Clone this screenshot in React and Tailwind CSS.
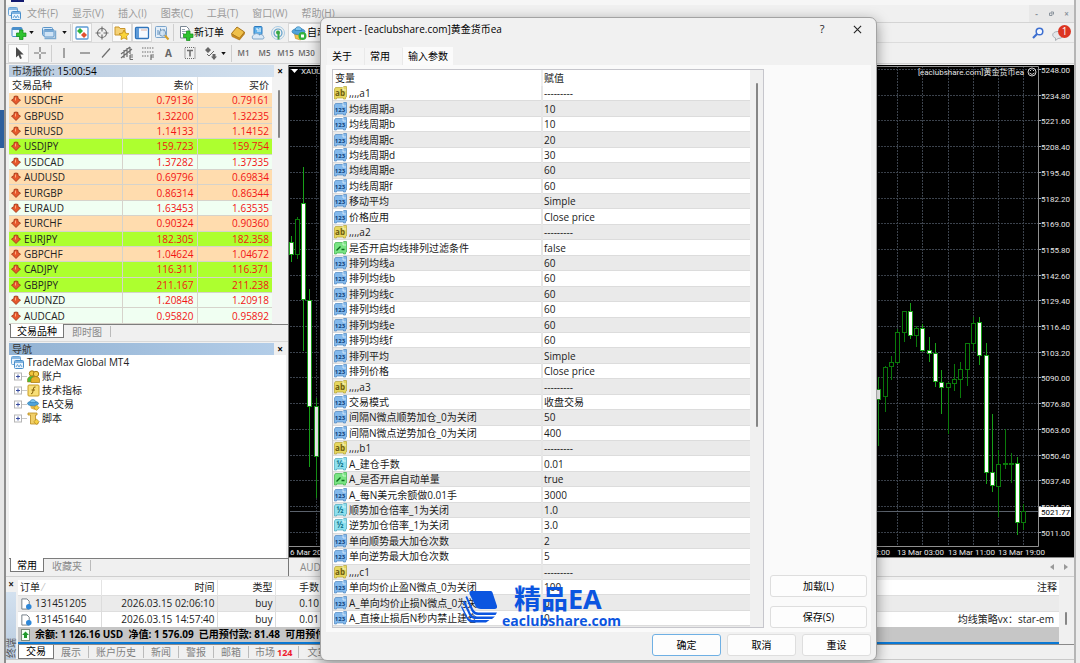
import React, { useState } from "react";

const SYMBOLS = [
  ["USDCHF", "0.79136", "0.79161", "o"],
  ["GBPUSD", "1.32200", "1.32235", "o"],
  ["EURUSD", "1.14133", "1.14152", "o"],
  ["USDJPY", "159.723", "159.754", "g"],
  ["USDCAD", "1.37282", "1.37335", "w"],
  ["AUDUSD", "0.69796", "0.69834", "o"],
  ["EURGBP", "0.86314", "0.86344", "o"],
  ["EURAUD", "1.63453", "1.63535", "w"],
  ["EURCHF", "0.90324", "0.90360", "o"],
  ["EURJPY", "182.305", "182.358", "g"],
  ["GBPCHF", "1.04624", "1.04672", "o"],
  ["CADJPY", "116.311", "116.371", "g"],
  ["GBPJPY", "211.167", "211.238", "g"],
  ["AUDNZD", "1.20848", "1.20918", "w"],
  ["AUDCAD", "0.95820", "0.95892", "w"],
];

const ROW_BG = { o: "bg-[#ffdcae]", g: "bg-[#adff2f]", w: "bg-[#f0fff2]" };

const PARAMS = [
  ["ab", ",,,,a1", "---------"],
  ["int", "均线周期a", "10"],
  ["int", "均线周期b", "10"],
  ["int", "均线周期c", "20"],
  ["int", "均线周期d", "30"],
  ["int", "均线周期e", "60"],
  ["int", "均线周期f", "60"],
  ["int", "移动平均", "Simple"],
  ["int", "价格应用", "Close price"],
  ["ab", ",,,,a2", "---------"],
  ["bool", "是否开启均线排列过滤条件", "false"],
  ["int", "排列均线a", "60"],
  ["int", "排列均线b", "60"],
  ["int", "排列均线c", "60"],
  ["int", "排列均线d", "60"],
  ["int", "排列均线e", "60"],
  ["int", "排列均线f", "60"],
  ["int", "排列平均", "Simple"],
  ["int", "排列价格", "Close price"],
  ["ab", ",,,,a3", "---------"],
  ["int", "交易模式", "收盘交易"],
  ["int", "间隔N微点顺势加仓_0为关闭", "50"],
  ["int", "间隔N微点逆势加仓_0为关闭", "400"],
  ["ab", ",,,,b1", "---------"],
  ["dbl", "A_建仓手数", "0.01"],
  ["bool", "A_是否开启自动单量", "true"],
  ["int", "A_每N美元余额做0.01手", "3000"],
  ["dbl", "顺势加仓倍率_1为关闭", "1.0"],
  ["dbl", "逆势加仓倍率_1为关闭", "3.0"],
  ["int", "单向顺势最大加仓次数", "2"],
  ["int", "单向逆势最大加仓次数", "5"],
  ["ab", ",,,,c1", "---------"],
  ["int", "单向均价止盈N微点_0为关闭", "100"],
  ["int", "A_单向均价止损N微点_0为关闭", "0"],
  ["int", "A_直接止损后N秒内禁止建仓", "0"],
  ["blank", "", ""],
];

const TYPE_ICON = {
  ab: { fill: "#e6d75f", edge: "#b5a436", ink: "#6b5c10", text: "ab" },
  int: { fill: "#83b9ec", edge: "#4f86c0", ink: "#0f3f7a", text: "123" },
  dbl: { fill: "#8ee0ee", edge: "#4aa8bd", ink: "#12748c", text: "½" },
  bool: { fill: "#79e583", edge: "#3faf4c", ink: "#0b6a1c" },
  blank: { fill: "#83b9ec", edge: "#4f86c0", ink: "#0f3f7a" },
};

const PRICES = [
  "5248.00", "5234.80", "5221.60", "5208.40", "5195.40", "5182.20", "5169.00",
  "5155.80", "5142.60", "5129.40", "5116.40", "5103.20", "5090.00", "5076.80",
  "5063.60", "5050.40", "5037.40", "5024.20", "5011.00",
];

// x, high, bodyTop, bodyBottom, low, bearish
const CANDLES = [
  [291, 236, 242, 254, 262, 1],
  [297, 217, 219, 254, 259, 0],
  [303, 167, 203, 299, 351, 1],
  [309, 289, 300, 406, 467, 1],
  [316, 398, 406, 456, 498, 1],
  [878, 377, 389, 399, 446, 1],
  [885, 366, 367, 396, 412, 0],
  [891, 356, 362, 366, 380, 0],
  [897, 329, 332, 362, 364, 0],
  [904, 311, 311, 332, 342, 0],
  [910, 303, 311, 335, 339, 1],
  [916, 326, 328, 335, 347, 0],
  [922, 324, 328, 350, 352, 1],
  [929, 337, 350, 353, 362, 1],
  [935, 343, 353, 381, 387, 1],
  [941, 370, 382, 387, 414, 1],
  [948, 382, 383, 387, 434, 0],
  [954, 364, 379, 383, 391, 0],
  [960, 362, 369, 379, 398, 0],
  [967, 343, 343, 369, 386, 0],
  [973, 317, 323, 343, 351, 0],
  [979, 317, 322, 355, 365, 1],
  [986, 343, 355, 472, 484, 1],
  [992, 414, 472, 485, 492, 1],
  [998, 450, 464, 486, 517, 0],
  [1005, 429, 463, 464, 469, 0],
  [1011, 453, 463, 464, 483, 0],
  [1017, 457, 463, 522, 535, 1],
  [1023, 504, 511, 522, 530, 0],
];

const GRID_X = [316, 341, 366, 392, 417, 847, 872, 897, 922, 948, 973, 998, 1023];

const MENUS = ["文件(F)", "显示(V)", "插入(I)", "图表(C)", "工具(T)", "窗口(W)", "帮助(H)"];

const TypeIcon = ({ type }) => {
  const t = TYPE_ICON[type];
  return (
    <svg viewBox="0 0 13 14" className="h-[14px] w-[13px] shrink-0">
      <path d="M1.500 1.500h7l1.500-1h2.500v10.500l-1 .5v1.500h-2v-1h-7v1h-2v-10z" fill={t.fill} stroke={t.edge} strokeWidth=".7" />
      <path d="M9 1v3h3" fill="none" stroke="#fff" strokeOpacity=".6" />
      {type === "bool" && (
        <path d="M2.500 9.500l4-4M7.500 8.500h3" stroke={t.ink} strokeWidth="1.400" fill="none" />
      )}
      {t.text && (
        <text x="6" y="9.500" textAnchor="middle" fontSize={type === "int" ? 6 : 8} fontWeight="700" fill={t.ink}>{t.text}</text>
      )}
    </svg>
  );
};

const WindowsIcon = () => (
  <svg viewBox="0 0 13 13" className="h-[13px] w-[13px] shrink-0">
    <rect x=".5" y=".5" width="9" height="8" rx="1" fill="#eaf4fd" stroke="#6aa5d8" />
    <path d="M1 2h8" stroke="#6aa5d8" strokeWidth="1.500" />
    <rect x="3.500" y="4.500" width="9" height="8" rx="1" fill="#eaf4fd" stroke="#4a8fcb" />
    <path d="M4 6h8" stroke="#5a9dd6" strokeWidth="1.500" />
    <path d="M5 11l1.500-2.500L8 11l1.500-2.500L11 11" fill="none" stroke="#4a8fcb" strokeWidth=".8" />
  </svg>
);

const Plus = ({ x = 5, y = 5 }) => (
  <path transform={`translate(${x} ${y})`} d="M3 0h3.500v3h3v3.500h-3v3h-3.500v-3h-3v-3.500h3z" fill="#2fc32f" stroke="#118a18" strokeWidth=".7" />
);

const NewChartIcon = () => (
  <svg viewBox="0 0 16 16" className="h-4 w-4">
    <rect x="1" y="2.500" width="10" height="9" rx="1" fill="#eef6fd" stroke="#4a8fcb" />
    <path d="M1 4h10" stroke="#4a8fcb" strokeWidth="2" />
    <Plus x={5.5} y={5} />
  </svg>
);

const ProfilesIcon = () => (
  <svg viewBox="0 0 16 16" className="h-4 w-4">
    <rect x="1.500" y="2.500" width="10" height="8" rx="1" fill="#d8e9f8" stroke="#5a94c8" />
    <path d="M3.500 13.500h11v-8" fill="none" stroke="#7daad0" strokeWidth="1.500" />
    <rect x="3" y="4.500" width="10" height="7.500" rx="1" fill="#cfe3f5" stroke="#5a94c8" />
    <path d="M3.500 6h9" stroke="#5a94c8" strokeWidth="1.500" />
  </svg>
);

const MarketIcon = () => (
  <svg viewBox="0 0 16 16" className="h-4 w-4">
    <rect x="2" y="2" width="12" height="12" rx="1" fill="#fff" stroke="#5b9bd5" strokeWidth="1.300" />
    <path d="M6 3l3 3-3 3-3-3z" fill="#2db43a" />
    <path d="M10 7l3 3-3 3-3-3z" fill="#e2502e" />
  </svg>
);

const TargetIcon = () => (
  <svg viewBox="0 0 16 16" className="h-4 w-4" fill="none" stroke="#707070" strokeWidth="1.200">
    <circle cx="8" cy="8" r="4.500" />
    <path d="M8 1.500v5M8 9.500v5M1.500 8h5M9.500 8h5" />
  </svg>
);

const FolderStarIcon = () => (
  <svg viewBox="0 0 16 16" className="h-4 w-4">
    <path d="M1 2h4l1 1.500h5V10H1z" fill="#f5d277" stroke="#c9962c" />
    <path d="M10 5l1.600 3.200 3.400.5-2.500 2.400.6 3.400-3.100-1.600-3 1.600.5-3.400L5 8.700l3.500-.5z" fill="#fbd53a" stroke="#c08a12" strokeWidth=".8" />
  </svg>
);

const PanelIcon = () => (
  <svg viewBox="0 0 16 16" className="h-4 w-4">
    <rect x="1.500" y="2.500" width="13" height="11" rx="1" fill="#f4f9ff" stroke="#2f74bb" strokeWidth="1.300" />
    <path d="M2 3h3v10H2z" fill="#5f9bd8" />
    <path d="M7 5h6" stroke="#e0b0a0" />
  </svg>
);

const TesterIcon = () => (
  <svg viewBox="0 0 16 16" className="h-4 w-4">
    <rect x="1.500" y="1.500" width="11" height="11" rx="1" fill="#e3eef8" stroke="#7ba5cc" />
    <path d="M4 10V5M6.500 9V3.500M10 10V4" stroke="#5c8fc0" />
    <circle cx="8.500" cy="8" r="3.200" fill="#cfe2f3" fillOpacity=".8" stroke="#7a9cbc" />
    <path d="M11 10.500l3.500 4" stroke="#d8a028" strokeWidth="2" />
  </svg>
);

const OrderIcon = () => (
  <svg viewBox="0 0 16 16" className="h-4 w-4">
    <path d="M2.500 1.500h6l2.500 2.500v9h-8.500z" fill="#fff" stroke="#7a8794" />
    <path d="M4 4.500h3M4 6.500h4M4 8.500h2" stroke="#9aa7b4" />
    <Plus x={5.5} y={6} />
  </svg>
);

const BookIcon = () => (
  <svg viewBox="0 0 16 16" className="h-4 w-4">
    <path d="M1.500 8.500L7 2l7.500 5-5 7z" fill="#efc04a" stroke="#a8741a" />
    <path d="M1.500 9l.5 2.500L9.500 15l5-6V7l-5 6z" fill="#c98a1e" stroke="#a8741a" strokeWidth=".6" />
  </svg>
);

const CommunityIcon = () => (
  <svg viewBox="0 0 16 16" className="h-4 w-4">
    <rect x="4" y="1.500" width="8" height="8" rx="1" fill="#5fb0ea" stroke="#2b79bd" />
    <path d="M6 4h2v3M10 3v4" stroke="#fff" fill="none" />
    <path d="M3 14a2.500 2.500 0 0 1 .5-4 3.500 3 0 0 1 6 0 2.500 2.500 0 0 1 4 1.500A1.500 1.500 0 0 1 13 14z" fill="#dbe9f6" stroke="#7fa5c8" />
  </svg>
);

const SignalIcon = () => (
  <svg viewBox="0 0 16 16" className="h-4 w-4" fill="none">
    <circle cx="8" cy="8" r="6.500" stroke="#a9cbe3" />
    <circle cx="8" cy="8" r="4" stroke="#5d9fca" strokeWidth="1.200" />
    <circle cx="8" cy="7.500" r="2" fill="#37a845" />
    <path d="M8.500 8v6.500" stroke="#37a845" strokeWidth="2" />
  </svg>
);

const HatIcon = () => (
  <svg viewBox="0 0 16 16" className="h-4 w-4 shrink-0">
    <path d="M3.500 9l1 4.500 5 1.500 3-4z" fill="#f0c24a" stroke="#b98a1c" strokeWidth=".6" />
    <ellipse cx="7.500" cy="6.500" rx="6.500" ry="3" fill="#4fa3d9" stroke="#2a78b0" strokeWidth=".7" />
    <path d="M4 5.500c0-5 6.500-5 7 0z" fill="#7cc4ee" stroke="#2a78b0" strokeWidth=".7" />
    <circle cx="11.500" cy="11" r="4" fill="#31b23c" />
    <path d="M10 9.500h3v3h-3z" fill="#fff" />
  </svg>
);

const Caret = () => (
  <svg viewBox="0 0 6 4" className="h-[3px] w-[5px]"><path d="M0 0h6L3 4z" fill="#111" /></svg>
);

const ToolBtn = ({ label, active, children }) => (
  <button
    type="button"
    aria-label={label}
    className={`flex h-[19px] w-[20px] items-center justify-center ${active ? "border border-[#d8d8d8] bg-[#fbfbfb]" : ""}`}
  >
    {children}
  </button>
);

const Sep = () => <span className="mx-px h-[17px] w-px bg-[#cfcfcf]" />;

const LineIcon = ({ children }) => (
  <svg viewBox="0 0 16 16" className="h-4 w-4" fill="none" stroke="#6e6e6e" strokeWidth="1.200">{children}</svg>
);

const Toolbars = () => (
  <div className="bg-[#f0f0f0] text-[#222]">
    <div className="flex h-5 items-center border-b border-[#dcdcdc] pl-[3px]">
      <ToolBtn label="新图表"><NewChartIcon /></ToolBtn>
      <span className="flex w-[10px]"><Caret /></span>
      <ToolBtn label="配置文件"><ProfilesIcon /></ToolBtn>
      <span className="flex w-[10px] justify-center"><Caret /></span>
      <Sep />
      <ToolBtn label="市场报价" active><MarketIcon /></ToolBtn>
      <ToolBtn label="数据窗口"><TargetIcon /></ToolBtn>
      <ToolBtn label="导航" active><FolderStarIcon /></ToolBtn>
      <ToolBtn label="终端" active><PanelIcon /></ToolBtn>
      <ToolBtn label="策略测试"><TesterIcon /></ToolBtn>
      <Sep />
      <button type="button" className="flex h-[19px] items-center pl-[3px] pr-1 text-black">
        <OrderIcon />新订单
      </button>
      <ToolBtn label="编辑器"><BookIcon /></ToolBtn>
      <ToolBtn label="社区"><CommunityIcon /></ToolBtn>
      <ToolBtn label="信号"><SignalIcon /></ToolBtn>
      <button type="button" className="flex h-[19px] items-center border border-[#d8d8d8] bg-[#fbfbfb] px-0.5 text-black">
        <HatIcon />自动交易
      </button>
      <div className="ml-auto flex items-center gap-2 pr-[3px]">
        <button type="button" aria-label="搜索">
          <svg viewBox="0 0 12 12" className="h-3 w-3">
            <circle cx="7.500" cy="4.500" r="3.300" fill="#f4f8ff" stroke="#3d6fd0" strokeWidth="1.500" />
            <path d="M5 7l-4 4" stroke="#3d6fd0" strokeWidth="2.200" />
          </svg>
        </button>
        <button type="button" className="relative flex h-4 w-[19px] items-end" aria-label="通知 1">
          <svg viewBox="0 0 12 10" className="h-[10px] w-3">
            <path d="M6 .5c7 0 7 7 0 7l-2.500 2V7C-1 5.500 0 .5 6 .5z" fill="#e4e7ea" stroke="#aab0b6" />
          </svg>
          <span className="absolute right-0 top-0 flex h-[13px] w-[13px] items-center justify-center rounded-full bg-[#dc3522] text-white">1</span>
        </button>
      </div>
    </div>
    <div className="flex h-[21px] items-center border-b border-[#d2d2d2] pl-[2px] text-[8px] font-semibold text-[#666] [&>button]:w-[21px]">
      <ToolBtn label="光标" active>
        <svg viewBox="0 0 16 16" className="h-4 w-4"><path d="M5 2v10.500l2.500-2.200 1.600 3.700 1.800-.8-1.600-3.600h3.400z" fill="#4a4a4a" /></svg>
      </ToolBtn>
      <ToolBtn label="十字线"><LineIcon><path d="M8 2v5M8 9v5M2 8h5M9 8h5" /></LineIcon></ToolBtn>
      <Sep />
      <ToolBtn label="垂直线"><LineIcon><path d="M8 3v10" /></LineIcon></ToolBtn>
      <ToolBtn label="水平线"><LineIcon><path d="M3 8h10" /></LineIcon></ToolBtn>
      <ToolBtn label="趋势线"><LineIcon><path d="M4 12.500l8-9" /></LineIcon></ToolBtn>
      <ToolBtn label="通道">
        <LineIcon><path d="M2 9l9-7M2 13L13 4M5 5v8M8 3v9M11 2v7M11 10h3M11 12h3M11 14.500h3M11 10v4.500" /></LineIcon>
      </ToolBtn>
      <ToolBtn label="斐波那契">
        <LineIcon><path d="M2 3h12M2 7h12M2 11h7" strokeDasharray="1.500 1" /><path d="M11 15v-5h3M11 12h3" /></LineIcon>
      </ToolBtn>
      <ToolBtn label="文字"><span className="text-[10px] font-bold">A</span></ToolBtn>
      <ToolBtn label="标签">
        <LineIcon><rect x="3" y="2.500" width="10" height="11" strokeDasharray="1 1" /><path d="M5 5.500h6M8 5.500v6" strokeWidth="1.600" /></LineIcon>
      </ToolBtn>
      <ToolBtn label="箭头">
        <svg viewBox="0 0 16 16" className="h-4 w-4" fill="#666">
          <path d="M5 2l3 3-3 3-3-3zM9.500 9h3v2.500H14L11 15l-3-3.500h1.500z" />
          <path d="M4 9l2 2 5-5" stroke="#666" fill="none" />
        </svg>
      </ToolBtn>
      <span className="flex w-[9px]"><Caret /></span>
      <Sep />
      {["M1", "M5", "M15", "M30", "H1"].map((p) => (
        <button key={p} type="button" className="h-[19px] text-center">{p}</button>
      ))}
    </div>
  </div>
);

const PanelTabs = ({ tabs }) => (
  <div className="flex h-[14px] items-stretch border-t border-[#7d7d7d] bg-[#f0f0f0] pl-px leading-[12px] text-[#8a8a8a]">
    {tabs.map((t, i) => (
      <button
        key={t}
        type="button"
        className={i === 0 ? "-mt-px border border-t-0 border-[#777] bg-white px-[6px] text-black" : "my-px border-r border-[#bbb] px-2"}
      >
        {t}
      </button>
    ))}
  </div>
);

const PanelTitle = ({ children, focused }) => (
  <div className="flex h-[12px] items-center leading-[12px] text-[#333]">
    <h2 className={`flex-1 pl-[3px] ${focused ? "bg-linear-to-r from-[#92b2d3] to-[#b3cde8]" : "bg-linear-to-r from-[#b9cbdf] to-[#d3e1ef]"}`}>{children}</h2>
    <button type="button" aria-label="关闭" className="mr-[2px] w-3 text-center font-bold text-black">×</button>
  </div>
);

const MarketWatch = () => (
  <section>
    <PanelTitle>市场报价: <span className="text-black">15:00:54</span></PanelTitle>
    <div className="flex h-[247px] overflow-hidden bg-[#f2f2f2]">
      <table className="h-[247px] w-[263px] table-fixed border-collapse bg-white leading-[14px]">
        <thead>
          <tr className="h-4">
            <th className="w-[113px] pl-[3px] text-left font-normal">交易品种</th>
            <th className="w-[75px] border-l border-[#e4e4e4] pr-[3px] text-right font-normal">卖价</th>
            <th className="border-l border-[#e4e4e4] pr-[3px] text-right font-normal">买价</th>
          </tr>
        </thead>
        <tbody>
          {SYMBOLS.map(([name, bid, ask, tone]) => (
            <tr key={name} className={`border-b border-[#d6d3cb] ${ROW_BG[tone]}`}>
              <td className="pl-[2px]">
                <span className="flex items-center gap-[3px]">
                  <svg viewBox="0 0 10 10" className="h-[10px] w-[10px]">
                    <path d="M3 1.500q2-1 4 0v2l2.500 1.500L5 9.500.5 5 3 3.500z" fill="#e6582c" stroke="#9c3411" strokeWidth=".8" />
                    <path d="M4.500 2.500v3" stroke="#ffab7a" />
                  </svg>
                  {name}
                </span>
              </td>
              <td className="border-l border-[#d6d3cb] pr-[3px] text-right text-[#f21414]">{bid}</td>
              <td className="border-l border-[#d6d3cb] pr-[3px] text-right text-[#f21414]">{ask}</td>
            </tr>
          ))}
        </tbody>
      </table>
      <span className="ml-[6px] mt-[13px] h-12 w-[2px] rounded bg-[#868686]" />
    </div>
    <PanelTabs tabs={["交易品种", "即时图"]} />
  </section>
);

const TREE = [
  ["账户", <svg viewBox="0 0 13 13" className="h-[13px] w-[13px]"><circle cx="5" cy="3.500" r="2.700" fill="#f1c63a" stroke="#a77c12" /><path d="M.5 12V9q1-3 5-3t5 3v3z" fill="#3fbe3c" stroke="#a77c12" strokeWidth=".6" /><circle cx="9" cy="4" r="2.700" fill="#f3cf50" stroke="#a77c12" /><path d="M4 12.500V9q1-2.500 4.500-2.500t4 2.500v3.500z" fill="#e5b22c" stroke="#a77c12" strokeWidth=".7" /></svg>],
  ["技术指标", <svg viewBox="0 0 13 13" className="h-[13px] w-[13px]"><rect x="1" y="1" width="11" height="11" rx="1" fill="#f8df78" stroke="#c89b22" /><path d="M8.500 3q-2-.5-2.200 2l-.5 3q-.2 2-1.800 1.800M4.500 6h3.500" fill="none" stroke="#86610b" /></svg>],
  ["EA交易", <svg viewBox="0 0 13 13" className="h-[13px] w-[13px]"><path d="M3 7l1 3.500 4 1.500 2-4z" fill="#e6b84a" /><ellipse cx="6" cy="5.500" rx="5.500" ry="2.300" fill="#4fa3d9" stroke="#2a78b0" strokeWidth=".6" /><path d="M3 4.500c0-4 5.500-4 6 0z" fill="#7cc4ee" stroke="#2a78b0" strokeWidth=".6" /><path d="M9.500 7l2.700 2.700-2.700 2.700-2.700-2.700z" fill="#f5cf45" stroke="#a77c12" strokeWidth=".6" /></svg>],
  ["脚本", <svg viewBox="0 0 13 13" className="h-[13px] w-[13px]"><path d="M1 1h9v2H8.500v7H11v2H3.500V3H1z" fill="#f1cf69" stroke="#b98a1c" strokeWidth=".8" /><path d="M9.500 7l2.700 2.700-2.700 2.700-2.700-2.700z" fill="#f5cf45" stroke="#a77c12" strokeWidth=".6" /></svg>],
];

const Navigator = () => (
  <section className="flex min-h-0 flex-1 flex-col border-t border-[#d9d9d9] pt-[1px]">
    <PanelTitle focused>导航</PanelTitle>
    <div className="mr-[2px] flex-1 bg-white px-[2px]">
      <div className="flex h-[14px] items-center gap-[3px]"><WindowsIcon />TradeMax Global MT4</div>
      <ul>
        {TREE.map(([label, icon]) => (
          <li key={label} className="flex h-[14px] items-center pl-[3px] leading-[14px]">
            <svg viewBox="0 0 13 9" className="h-[9px] w-[13px]">
              <path d="M8 4.500h5" stroke="#c8c8c8" />
              <rect x=".5" y="1" width="7" height="7" fill="#fff" stroke="#b5b5b5" />
              <path d="M2 4.500h4M4 2.500v4" stroke="#3a4fa0" />
            </svg>
            {icon}
            <span className="pl-[2px]">{label}</span>
          </li>
        ))}
      </ul>
    </div>
    <PanelTabs tabs={["常用", "收藏夹"]} />
  </section>
);

const Chart = () => (
  <svg viewBox="289 65 785 492" preserveAspectRatio="none" className="min-h-0 w-full flex-1 bg-black font-[Roboto,'Noto_Sans_CJK_SC',sans-serif]" fontSize="8" fill="#e6e6e6">
    {GRID_X.map((x) => (
      <path key={x} d={`M${x + 0.5} 66V546`} stroke="#3c434d" strokeDasharray="2 1" />
    ))}
    {PRICES.map((p, i) => {
      const y = Math.round(70 + i * 25.7);
      return (
        <g key={p}>
          <path d={`M290 ${y - 0.5}H1038`} stroke="#3c434d" strokeDasharray="2 1" />
          <path d={`M1038 ${y - 0.5}h3`} stroke="#aaa" />
          <text x="1041" y={y + 3}>{p}</text>
        </g>
      );
    })}
    <path d="M290 511.500H1038" stroke="#5b626c" />
    <path d="M289 66.500H1038.500V546.500H289" fill="none" stroke="#8f8f8f" />
    {CANDLES.map(([x, hi, top, bot, lo, bear]) => (
      <g key={x} stroke={bear ? "#18a018" : "#0a7a0a"}>
        <path d={`M${x + 0.5} ${hi}V${lo}`} />
        <rect x={x - 1.5} y={top + 0.5} width="4" height={bot - top} fill={bear ? "#fff" : "#000"} />
      </g>
    ))}
    <path d="M291 69h7l-3.500 4z" fill="#fff" />
    <text x="301" y="74">XAUUSD,H1</text>
    <text x="1024" y="75" textAnchor="end">[eaclubshare.com]黄金货币ea</text>
    <circle cx="1032" cy="72" r="4" fill="none" stroke="#ccc" />
    <path d="M1029.500 73q2.500 3 5 0M1030.500 70v1M1033.500 70v1" fill="none" stroke="#ccc" />
    <text x="290" y="555">6 Mar 2026</text>
    <text x="890" y="555" textAnchor="end">12 Mar 23:00</text>
    <text x="897" y="555">13 Mar 03:00</text>
    <text x="948" y="555">13 Mar 11:00</text>
    <text x="998" y="555">13 Mar 19:00</text>
    <rect x="1039" y="507" width="32" height="10" fill="#fff" />
    <text x="1041" y="515" fill="#000">5021.77</text>
  </svg>
);

const ORDERS = [
  ["131451205", "2026.03.15 02:06:10", "buy", "0.10", ""],
  ["131451640", "2026.03.15 14:57:40", "buy", "0.01", "均线策略vx：star-em"],
];

const Terminal = () => (
  <section className="flex border-t border-[#cfcfcf] pt-[3px]">
    <div className="flex w-[10px] flex-col items-center leading-[8px]">
      <button type="button" aria-label="关闭" className="font-bold">×</button>
      <div className="mt-1 flex w-full flex-1 items-end justify-center bg-linear-to-b from-[#d3e1ef] to-[#b9cbdf] pb-px text-[#555]">
        <span className="leading-[10px] [writing-mode:sideways-lr]">终端</span>
      </div>
    </div>
    <div className="ml-[2px] min-w-0 flex-1">
      <div className="flex">
        <div className="min-w-0 flex-1 border-b-2 border-[#0a78d4] bg-[#c6c6c6]">
          <table className="w-full table-fixed border-collapse bg-white leading-[15px]">
            <thead>
              <tr>
                <th className="w-[83px] pl-[2px] text-left font-normal">订单 <span className="text-[#bbb]">⁄</span></th>
                <th className="w-[116px] border-l border-[#e4e4e4] pr-[2px] text-right font-normal">时间</th>
                <th className="w-[58px] border-l border-[#e4e4e4] pr-[2px] text-right font-normal">类型</th>
                <th className="w-[46px] border-l border-[#e4e4e4] pr-[2px] text-right font-normal">手数</th>
                <th className="pr-[2px] text-right font-normal">注释</th>
              </tr>
            </thead>
            <tbody>
              {ORDERS.map(([id, time, type, lots, note], i) => (
                <tr key={id} className={`border-t border-[#dedede] ${i === 0 ? "bg-[#ebebeb]" : "bg-white"}`}>
                  <td className="pl-[2px]">
                    <span className="flex items-center gap-[3px]">
                      <svg viewBox="0 0 12 13" className="h-3 w-3">
                        <path d="M1.500 1h5.500l2.500 2.500v8.500h-8z" fill="#fff" stroke="#6d7780" />
                        <circle cx="9" cy="9.500" r="3" fill="#2d87d8" />
                      </svg>
                      {id}
                    </span>
                  </td>
                  <td className="border-l border-[#dcdcdc] pr-[2px] text-right">{time}</td>
                  <td className="border-l border-[#dcdcdc] pr-[2px] text-right">{type}</td>
                  <td className="border-l border-[#dcdcdc] pr-[2px] text-right">{lots}</td>
                  <td className="pr-[5px] text-right">{note}</td>
                </tr>
              ))}
            </tbody>
          </table>
          <p className="flex h-[15px] items-center gap-[3px] overflow-hidden pl-[2px] font-bold whitespace-pre text-black">
            <svg viewBox="0 0 12 12" className="h-3 w-3 shrink-0">
              <rect x="1.500" y=".5" width="8" height="11" fill="#f4fff4" stroke="#7c8a7c" />
              <path d="M5.500 2.500L9 6H7v3H4V6H2z" fill="#1f9a2a" />
            </svg>
            余额: 1 126.16 USD  净值: 1 576.09  已用预付款: 81.48  可用预付款: 1 494.61
          </p>
        </div>
        <div className="w-[15px] pl-[6px] pt-[32px]">
          <div className="h-[13px] w-[2px] rounded bg-[#868686]" />
        </div>
      </div>
      <div className="flex h-[15px] items-stretch border-t border-[#8a8a8a] leading-[13px] text-[#808080]">
        <button type="button" className="border border-t-0 border-[#777] bg-white px-[7px] text-black">交易</button>
        {["展示", "账户历史", "新闻", "警报", "邮箱"].map((t) => (
          <button key={t} type="button" className="my-px border-r border-[#bbb] px-[7px]">{t}</button>
        ))}
        <button type="button" className="my-px flex border-r border-[#bbb] px-[6px]">
          市场<b className="pl-0.5 text-[9px] text-[#ee1c2e]">124</b>
        </button>
        <button type="button" className="px-2">文章</button>
      </div>
    </div>
  </section>
);

const dialogButton = "h-[22px] rounded-[3px] border bg-[#fdfdfd] text-center text-black";

const ExpertDialog = () => {
  const [tab, setTab] = useState(2);

  return (
    <div
      role="dialog"
      aria-labelledby="dlg-title"
      className="absolute bottom-[2px] left-[320px] top-[17px] flex w-[557px] flex-col rounded-[7px] border border-[#a3a3a3] bg-[#f1f1f1] px-[5px] pb-[4px] shadow-[0_4px_14px_rgba(0,0,0,0.4)]"
    >
      <div className="flex h-[29px] items-start justify-between pr-[8px] pt-[4px]">
        <h1 id="dlg-title" className="leading-[14px] text-black">Expert - [eaclubshare.com]黄金货币ea</h1>
        <div className="flex gap-[26px] leading-[14px]">
          <button type="button" aria-label="帮助" className="w-[10px] text-[11px]">?</button>
          <button type="button" aria-label="关闭" className="flex h-[14px] w-[10px] items-center">
            <svg viewBox="0 0 10 10" className="h-[9px] w-[9px]"><path d="M1 1l8 8M9 1L1 9" stroke="#222" strokeWidth="1.200" /></svg>
          </button>
        </div>
      </div>
      <div role="tablist" className="flex h-[18px] items-end pl-px">
        {["关于", "常用", "输入参数"].map((t, i) => (
          <button
            key={t}
            type="button"
            role="tab"
            aria-selected={tab === i}
            onClick={() => setTab(i)}
            className={tab === i
              ? "h-[18px] bg-[#fbfbfb] px-[5px] text-black"
              : "h-[17px] border-r border-[#e9e9e9] bg-[#f5f5f5] pl-[5px] pr-[12px] text-black"}
          >
            {t}
          </button>
        ))}
      </div>
      <div className="flex min-h-0 flex-1 bg-[#fafafa] pb-[4px] pl-[6px] pr-[4px] pt-[4px]">
        <div className="flex min-h-0 w-[432px] overflow-hidden border border-[#c6c6cc] bg-[#f0f0f0]">
          <table className="h-[572px] w-[417px] table-fixed border-collapse bg-white leading-[14px] text-[#1a1a1a]">
            <thead>
              <tr className="h-4">
                <th className="w-[209px] pl-[2px] text-left font-normal">变量</th>
                <th className="border-l-2 border-[#efefef] pl-px text-left font-normal">赋值</th>
              </tr>
            </thead>
            <tbody>
              {PARAMS.map(([type, name, value], i) => (
                <tr key={i} className={`border-b border-[#dcdcdc] ${i % 2 ? "bg-[#eaeaea]" : "bg-white"}`}>
                  <td className="pl-px">
                    <span className="flex h-[14px] items-center gap-[2px] whitespace-nowrap">
                      <TypeIcon type={type} />
                      {name}
                    </span>
                  </td>
                  <td className="border-l-2 border-[#e6e6e6] pl-px">{value}</td>
                </tr>
              ))}
            </tbody>
          </table>
          <div className="flex-1 pl-[6px] pt-[13px]">
            <div className="h-[344px] w-[2px] rounded bg-[#868686]" />
          </div>
        </div>
        <div className="flex flex-1 flex-col justify-end gap-[9px] pl-[6px]">
          <button type="button" className={`${dialogButton} border-[#dedede]`}>加载(L)</button>
          <button type="button" className={`${dialogButton} border-[#dedede]`}>保存(S)</button>
        </div>
      </div>
      <div className="flex justify-end gap-[6px] pt-[2px]">
        <button type="button" className={`${dialogButton} w-[69px] border-[#6fb0e4]`}>确定</button>
        <button type="button" className={`${dialogButton} w-[69px] border-[#dedede]`}>取消</button>
        <button type="button" className={`${dialogButton} w-[69px] border-[#dedede]`}>重设</button>
      </div>
    </div>
  );
};

const Watermark = () => (
  <div className="absolute left-[461px] top-[585px] flex items-start gap-1 text-[#0b55e0]">
    <svg viewBox="0 0 37 32" className="mt-[6px] h-8 w-[37px]">
      <path d="M10 0h20q1 0 1.500 1.500l4.500 13.500q.5 3-2.500 3H20q-4 0-5.500-3L8.500 3Q8 0 10 0z" fill="#0b55e0" />
      <path d="M6 5l6 13q2 3.500 5.500 3.500h18.500l-1.500 2.500H17q-4.500 0-6.500-4L4.500 6z" fill="#0b55e0" />
      <path d="M3.500 9.500l6 12.500q2 3.500 5.500 3.500h19l-3 2.500H14.500q-4.500 0-6.500-4L2 11z" fill="#0b55e0" />
      <path d="M1 15l5.500 11q2 3 5.500 3h16.500l-3.500 2.500H11.500q-4 0-6-4L0 16z" fill="#0b55e0" />
    </svg>
    <div className="font-bold">
      <div className="pl-[12px] text-[27px] leading-[28px]">精品EA</div>
      <div className="text-[14px] leading-[15px]">eaclubshare.com</div>
    </div>
  </div>
);

const App = () => (
  <div className="relative flex h-screen min-h-[600px] overflow-hidden bg-[#ececec] font-['Open_Sans','Noto_Sans_CJK_SC',sans-serif] text-[10px] text-[#222]">
    <div className="flex w-[6px] flex-col border-r-2 border-[#8d8d8d] bg-[#e6e6e6]">
      <div className="mt-[110px] h-[38px] w-full bg-[#2d5f9e]" />
    </div>
    <main className="flex min-w-0 flex-1 flex-col bg-[#f0f0f0]">
      <div className="h-[5px] bg-[#f6f6f6] pl-[5px]"><div className="h-[2px] w-[13px] bg-[#131a70]" /></div>
      <nav className="flex h-[18px] items-center border-b border-[#d4d4d4] pl-[2px] text-[#9a9a9a]">
        <WindowsIcon />
        <div className="flex gap-[14px] pl-[6px]">
          {MENUS.map((m) => <a key={m} href="#" className="whitespace-nowrap">{m}</a>)}
        </div>
        <div className="ml-auto flex h-full items-center bg-[#e8e8e8] text-[8px] font-bold text-[#8a939c]">
          <button type="button" className="w-[15px]" aria-label="最小化">-</button>
          <button type="button" className="flex w-[15px] justify-center" aria-label="还原">
            <svg viewBox="0 0 5 5" className="h-[5px] w-[5px]" fill="none" stroke="#8a939c"><path d="M.5 2h2.500v2.500H.5zM2 1h2.500v2.500" /></svg>
          </button>
          <button type="button" className="w-[15px]" aria-label="关闭">×</button>
        </div>
      </nav>
      <Toolbars />
      <div className="flex min-h-0 flex-1 pt-px">
        <aside className="flex w-[282px] shrink-0 flex-col pl-[3px]">
          <MarketWatch />
          <div className="h-[3px]" />
          <Navigator />
          <div className="h-[4px]" />
        </aside>
        <div className="flex min-w-0 flex-1 flex-col border-l border-[#777]">
          <Chart />
          <div className="flex h-[19px] justify-between border-t border-[#8a8a8a] pl-[11px] pr-[6px] leading-[17px] text-[#8a8a8a]">
            <button type="button">AUDUSD,H1</button>
            <div className="flex items-center gap-[10px]">
              <svg viewBox="0 0 4 6" className="h-[6px] w-[4px]"><path d="M4 0v6L0 3z" fill="#999" /></svg>
              <svg viewBox="0 0 4 6" className="h-[6px] w-[4px]"><path d="M0 0v6l4-3z" fill="#999" /></svg>
            </div>
          </div>
        </div>
      </div>
      <Terminal />
      <div className="h-[4px] border-t border-[#c9c9c9]" />
    </main>
    <div className="w-[6px] border-l-2 border-[#b5b5b5] bg-[#ededed]" />
    <ExpertDialog />
    <Watermark />
  </div>
);

export default App;
